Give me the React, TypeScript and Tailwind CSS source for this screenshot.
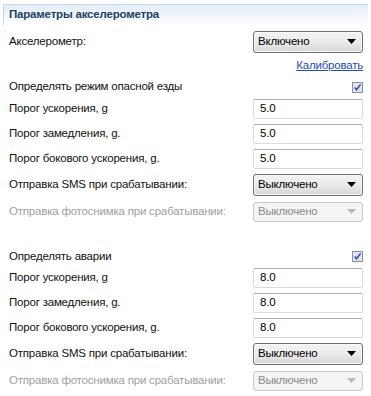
import React from "react";

const Arrow = ({ disabled }: { disabled?: boolean }) => (
  <svg width="9" height="5" viewBox="0 0 9 5" className="shrink-0">
    <path d="M0 0h9L4.5 5z" fill={disabled ? "#b8b8b8" : "#000"} />
  </svg>
);

const Select = ({ value, disabled }: { value: string; disabled?: boolean }) => (
  <div
    className={
      disabled
        ? "flex h-[20px] w-[110px] items-center justify-between rounded-[3px] border border-[#c9c9c9] bg-[#f4f4f4] pl-[4px] pr-[6px] text-[#8a8a8a]"
        : "flex h-[22px] w-[110px] items-center justify-between rounded-[3px] border border-[#6f6f6f] bg-gradient-to-b from-[#f3f3f3] via-[#ebebeb] to-[#d6d6d6] pl-[4px] pr-[6px] text-black shadow-[inset_0_0_0_1px_#fafafa]"
    }
  >
    <span>{value}</span>
    <Arrow disabled={disabled} />
  </div>
);

const Input = ({ value }: { value: string }) => (
  <div className="flex h-[20px] w-[110px] items-center rounded-[2px] border border-[#d5dbe1] border-t-[#abadb3] bg-white px-[6px] text-black">
    {value}
  </div>
);

const Check = () => (
  <svg width="11" height="11" viewBox="0 0 11 11">
    <rect x="0.5" y="0.5" width="10" height="10" fill="#e6e9ee" stroke="#8e8f8f" />
    <rect x="1.5" y="1.5" width="8" height="8" fill="#dfe4ec" />
    <path d="M2.6 5.6L4.5 7.8L8.6 2.4" fill="none" stroke="#2a4dbb" strokeWidth="1.5" />
  </svg>
);

const Row = ({ h, label, muted, children }: { h: string; label: string; muted?: boolean; children: React.ReactNode }) => (
  <div className={`flex items-center justify-between ${h}`}>
    <span className={muted ? "text-[#a0a0a0]" : "text-[#111]"}>{label}</span>
    {children}
  </div>
);

const Section = ({ title, value, first }: { title: string; value: string; first?: boolean }) => (
  <div>
    <Row h={first ? "h-[18px]" : "h-[17px]"} label={title}>
      <Check />
    </Row>
    <Row h="h-[25px]" label="Порог ускорения, g">
      <Input value={value} />
    </Row>
    <Row h="h-[25px]" label="Порог замедления, g.">
      <Input value={value} />
    </Row>
    <Row h="h-[25px]" label="Порог бокового ускорения, g.">
      <Input value={value} />
    </Row>
    <Row h="h-[27px]" label="Отправка SMS при срабатывании:">
      <Select value="Выключено" />
    </Row>
    <Row h="h-[27px]" label="Отправка фотоснимка при срабатывании:" muted>
      <Select value="Выключено" disabled />
    </Row>
  </div>
);

export default function App() {
  return (
    <div className="h-[396px] w-[371px] bg-white font-['Liberation_Sans',Arial,sans-serif] text-[11.5px] tracking-[-0.2px]">
      <div className="mx-[3px] pt-[4px]">
        <div className="flex h-[21px] items-center rounded-tl-[2px] border-l border-t border-[#c5d8ec] bg-gradient-to-b from-[#e2edf8] to-white pl-[5px] font-bold text-[#233f60]">
          Параметры акселерометра
        </div>
      </div>
      <div className="pl-[9px] pr-[8px]">
        <Row h="h-[25px] mt-[4px]" label="Акселерометр:">
          <Select value="Включено" />
        </Row>
        <div className="flex h-[24px] items-center justify-end">
          <span className="text-[#1e4bb5] underline">Калибровать</span>
        </div>
        <Section title="Определять режим опасной езды" value="5.0" first />
        <div className="h-[23px]" />
        <Section title="Определять аварии" value="8.0" />
      </div>
    </div>
  );
}
